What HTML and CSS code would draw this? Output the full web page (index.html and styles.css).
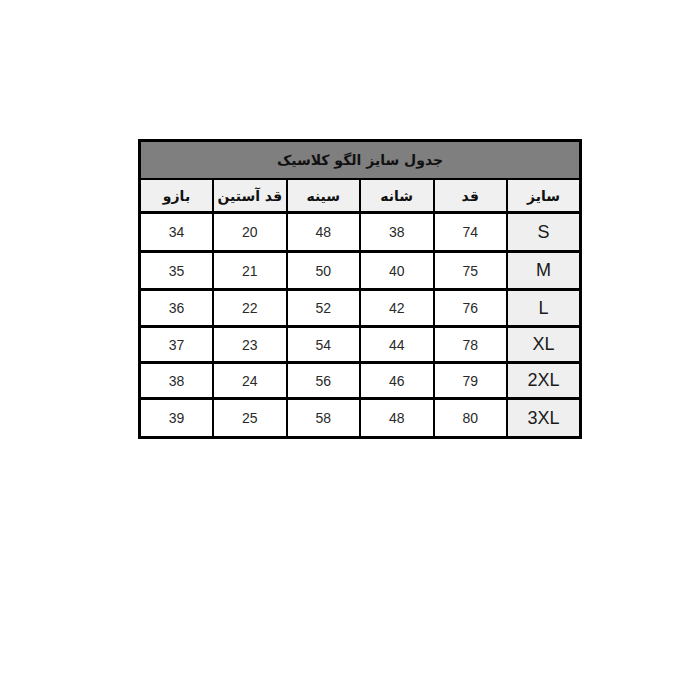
FILE: index.html
```html
<!DOCTYPE html>
<html lang="fa">
<head>
<meta charset="utf-8">
<title>جدول سایز</title>
<link rel="stylesheet" href="styles.css">
</head>
<body>
<div class="page">
<table class="chart" dir="rtl">
<colgroup><col><col><col><col><col><col></colgroup>
<tr class="title"><th colspan="6">جدول سایز الگو کلاسیک</th></tr>
<tr class="head"><th>سایز</th><th>قد</th><th>شانه</th><th>سینه</th><th>قد آستین</th><th>بازو</th></tr>
<tr class="r1"><td class="sz">S</td><td>74</td><td>38</td><td>48</td><td>20</td><td>34</td></tr>
<tr class="r2"><td class="sz">M</td><td>75</td><td>40</td><td>50</td><td>21</td><td>35</td></tr>
<tr class="r3"><td class="sz">L</td><td>76</td><td>42</td><td>52</td><td>22</td><td>36</td></tr>
<tr class="r4"><td class="sz">XL</td><td>78</td><td>44</td><td>54</td><td>23</td><td>37</td></tr>
<tr class="r5"><td class="sz">2XL</td><td>79</td><td>46</td><td>56</td><td>24</td><td>38</td></tr>
<tr class="r6"><td class="sz">3XL</td><td>80</td><td>48</td><td>58</td><td>25</td><td>39</td></tr>
</table>
</div>
</body>
</html>
```
FILE: styles.css
```css
html, body {
  margin: 0;
  padding: 0;
  background: #ffffff;
}
.page {
  padding: 139px 0 0 138px;
}
.chart {
  border-collapse: collapse;
  table-layout: fixed;
  width: 444px;
  border: 3px solid #000;
}
.chart th, .chart td {
  border: 2px solid #000;
  padding: 0;
  text-align: center;
  vertical-align: middle;
  overflow: visible;
  white-space: nowrap;
}
.title th {
  height: 36px;
  background: #7f7f7f;
  color: #111;
  font-family: "DejaVu Sans", sans-serif;
  font-weight: bold;
  font-size: 14px;
  border-bottom-width: 2px;
}
.head th {
  height: 31px;
  background: #f0f0f0;
  color: #111;
  font-family: "DejaVu Sans", sans-serif;
  font-weight: bold;
  font-size: 14px;
  border-bottom-width: 3px;
}
.chart td {
  height: 35px;
  background: #fff;
  color: #2a2a2a;
  font-family: "Liberation Sans", Arial, sans-serif;
  font-size: 14px;
  border-bottom-width: 3px;
}
.chart td.sz {
  background: #efefef;
  color: #1a1a1a;
  font-size: 18px;
}
.r1 td { height: 36px; }
.r2 td { height: 35px; }
.r3 td { height: 34px; }
.r4 td { height: 33px; }
.r5 td { height: 33px; }
.r6 td { height: 36px; }
```
